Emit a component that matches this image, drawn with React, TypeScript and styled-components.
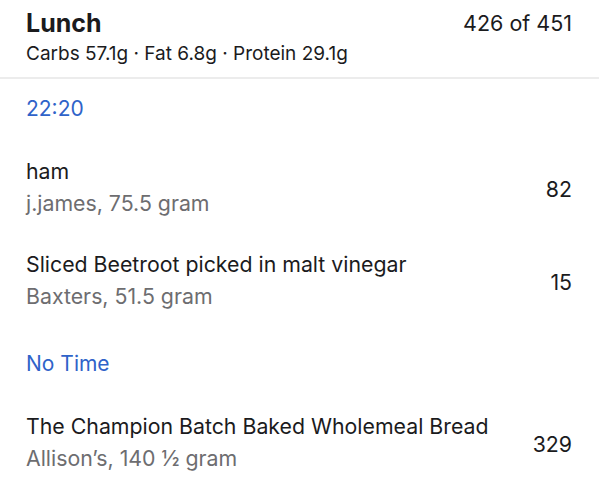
import React from 'react';
import styled, { createGlobalStyle } from 'styled-components';

const Global = createGlobalStyle`
    body {
        margin: 0;
        background: #ffffff;
        font-family: Inter, "Noto Sans", sans-serif;
        color: #1b1b1d;
    }
`;

const Page = styled.div`
    width: 599px;
    display: flex;
    flex-direction: column;
`;

const Header = styled.div`
    display: flex;
    justify-content: space-between;
    align-items: flex-start;
    padding: 8px 27px 12px 26px;
    border-bottom: 2px solid #ececec;
`;

const Title = styled.div`
    font-size: 25px;
    font-weight: 700;
    line-height: 30px;
`;

const Macros = styled.div`
    font-size: 19px;
    line-height: 22px;
    margin-top: 5px;
`;

const Total = styled.div`
    font-size: 21.5px;
    line-height: 30px;
`;

const Group = styled.div`
    & + & {
        margin-top: 8px;
    }
`;

const SectionLabel = styled.div`
    color: #2f63c9;
    font-size: 21px;
    line-height: 26px;
    padding: 17px 26px 18px;
`;

const Entry = styled.div`
    display: flex;
    justify-content: space-between;
    align-items: center;
    padding: 15px 27px 14px 26px;
`;

const Name = styled.div`
    font-size: 21.3px;
    line-height: 32px;
`;

const Detail = styled.div`
    font-size: 21.3px;
    line-height: 32px;
    color: #6d6d70;
`;

const Calories = styled.div`
    font-size: 21.3px;
    padding-top: 3px;
`;

type Food = { name: string; detail: string; kcal: number };

const groups: { label: string; foods: Food[] }[] = [
    {
        label: '22:20',
        foods: [
            { name: 'ham', detail: 'j.james, 75.5 gram', kcal: 82 },
            { name: 'Sliced Beetroot picked in malt vinegar', detail: 'Baxters, 51.5 gram', kcal: 15 },
        ],
    },
    {
        label: 'No Time',
        foods: [
            { name: 'The Champion Batch Baked Wholemeal Bread', detail: 'Allison\u2019s, 140 \u00bd gram', kcal: 329 },
        ],
    },
];

function App(): JSX.Element {
    return (
        <Page>
            <Global />
            <Header>
                <div>
                    <Title>Lunch</Title>
                    <Macros>Carbs 57.1g · Fat 6.8g · Protein 29.1g</Macros>
                </div>
                <Total>426 of 451</Total>
            </Header>
            {groups.map(group => (
                <Group key={group.label}>
                    <SectionLabel>{group.label}</SectionLabel>
                    {group.foods.map(food => (
                        <Entry key={food.name}>
                            <div>
                                <Name>{food.name}</Name>
                                <Detail>{food.detail}</Detail>
                            </div>
                            <Calories>{food.kcal}</Calories>
                        </Entry>
                    ))}
                </Group>
            ))}
        </Page>
    );
}

export default App;
